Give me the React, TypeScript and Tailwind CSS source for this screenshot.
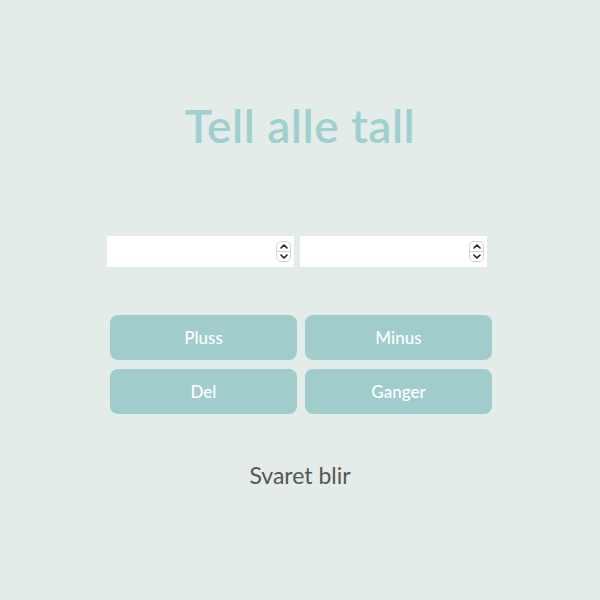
import { useState } from "react";

const ops = ["Pluss", "Minus", "Del", "Ganger"];

function NumberField({ value, onChange }: { value: string; onChange: (v: string) => void }) {
  const step = (d: number) => onChange(String((Number(value) || 0) + d));
  return (
    <div className="relative">
      <input
        type="number"
        value={value}
        onChange={(e) => onChange(e.target.value)}
        className="w-[187px] h-[31px] bg-white pl-2 pr-6 outline-none [appearance:textfield] [&::-webkit-inner-spin-button]:appearance-none"
      />
      <div className="absolute right-[3px] top-[5px] w-[15px] h-[21px] flex flex-col rounded-[5px] border border-[#d4d4d4] bg-white overflow-hidden">
        <button onClick={() => step(1)} className="flex-1 flex items-center justify-center border-b border-[#d4d4d4]">
          <svg width="8" height="5" viewBox="0 0 8 5" fill="none" stroke="#222" strokeWidth="1.6" strokeLinecap="round" strokeLinejoin="round">
            <path d="M1 4L4 1L7 4" />
          </svg>
        </button>
        <button onClick={() => step(-1)} className="flex-1 flex items-center justify-center">
          <svg width="8" height="5" viewBox="0 0 8 5" fill="none" stroke="#222" strokeWidth="1.6" strokeLinecap="round" strokeLinejoin="round">
            <path d="M1 1L4 4L7 1" />
          </svg>
        </button>
      </div>
    </div>
  );
}

export default function App() {
  const [a, setA] = useState("");
  const [b, setB] = useState("");

  return (
    <div className="min-h-[600px] w-[600px] bg-[#e3ece9] flex flex-col items-center font-['Lato',sans-serif]">
      <h1 className="mt-[96px] text-[46px] leading-[60px] font-semibold text-[#9fcfcf] tracking-[0.5px]">
        Tell alle tall
      </h1>
      <div className="mt-[80px] flex gap-[6px] ml-[-6px]">
        <NumberField value={a} onChange={setA} />
        <NumberField value={b} onChange={setB} />
      </div>
      <div className="mt-[48px] ml-[2px] grid grid-cols-2 gap-x-[8px] gap-y-[9px]">
        {ops.map((op) => (
          <button
            key={op}
            className="w-[187px] h-[45px] rounded-[8px] bg-[#a0cccc] text-white text-[17px] font-medium"
          >
            {op}
          </button>
        ))}
      </div>
      <p className="mt-[44px] text-[23px] text-[#555555]">Svaret blir</p>
    </div>
  );
}
